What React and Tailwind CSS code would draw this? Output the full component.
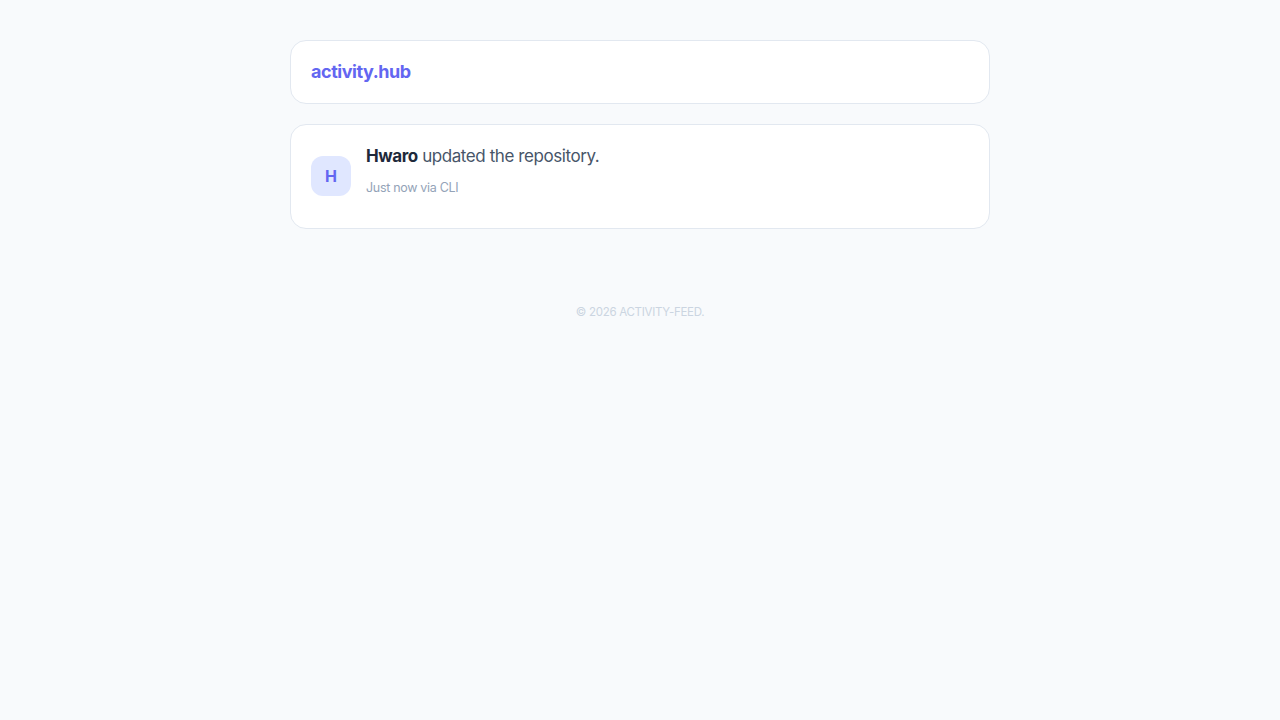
export default function App() {
  return (
    <div
      className="min-h-screen bg-[#f8fafc] pt-10"
      style={{ fontFamily: "Inter, 'Noto Sans', sans-serif" }}
    >
      <div className="mx-auto flex w-[700px] flex-col gap-5">
        <header className="rounded-2xl border border-[#e2e8f0] bg-white px-5 py-[17px]">
          <h1 className="text-lg font-bold tracking-tight text-[#6366f1]">
            activity.hub
          </h1>
        </header>

        <div className="flex items-start gap-[15px] rounded-2xl border border-[#e2e8f0] bg-white px-5 pt-5 pb-[30px]">
          <div className="mt-[11px] flex h-10 w-10 shrink-0 items-center justify-center rounded-xl bg-[#e0e7ff] text-base font-bold text-[#6366f1]">
            H
          </div>
          <div>
            <p className="text-[17px] leading-[22px] tracking-tight text-[#475569]">
              <span className="font-bold text-[#1e293b]">Hwaro</span> updated
              the repository.
            </p>
            <p className="mt-[11px] text-[12.5px] leading-5 tracking-tight text-[#94a3b8]">
              Just now via CLI
            </p>
          </div>
        </div>
      </div>

      <footer className="mt-[75px] text-center text-[11.5px] leading-4 tracking-tight text-[#cbd5e1]">
        © 2026 ACTIVITY-FEED.
      </footer>
    </div>
  );
}
